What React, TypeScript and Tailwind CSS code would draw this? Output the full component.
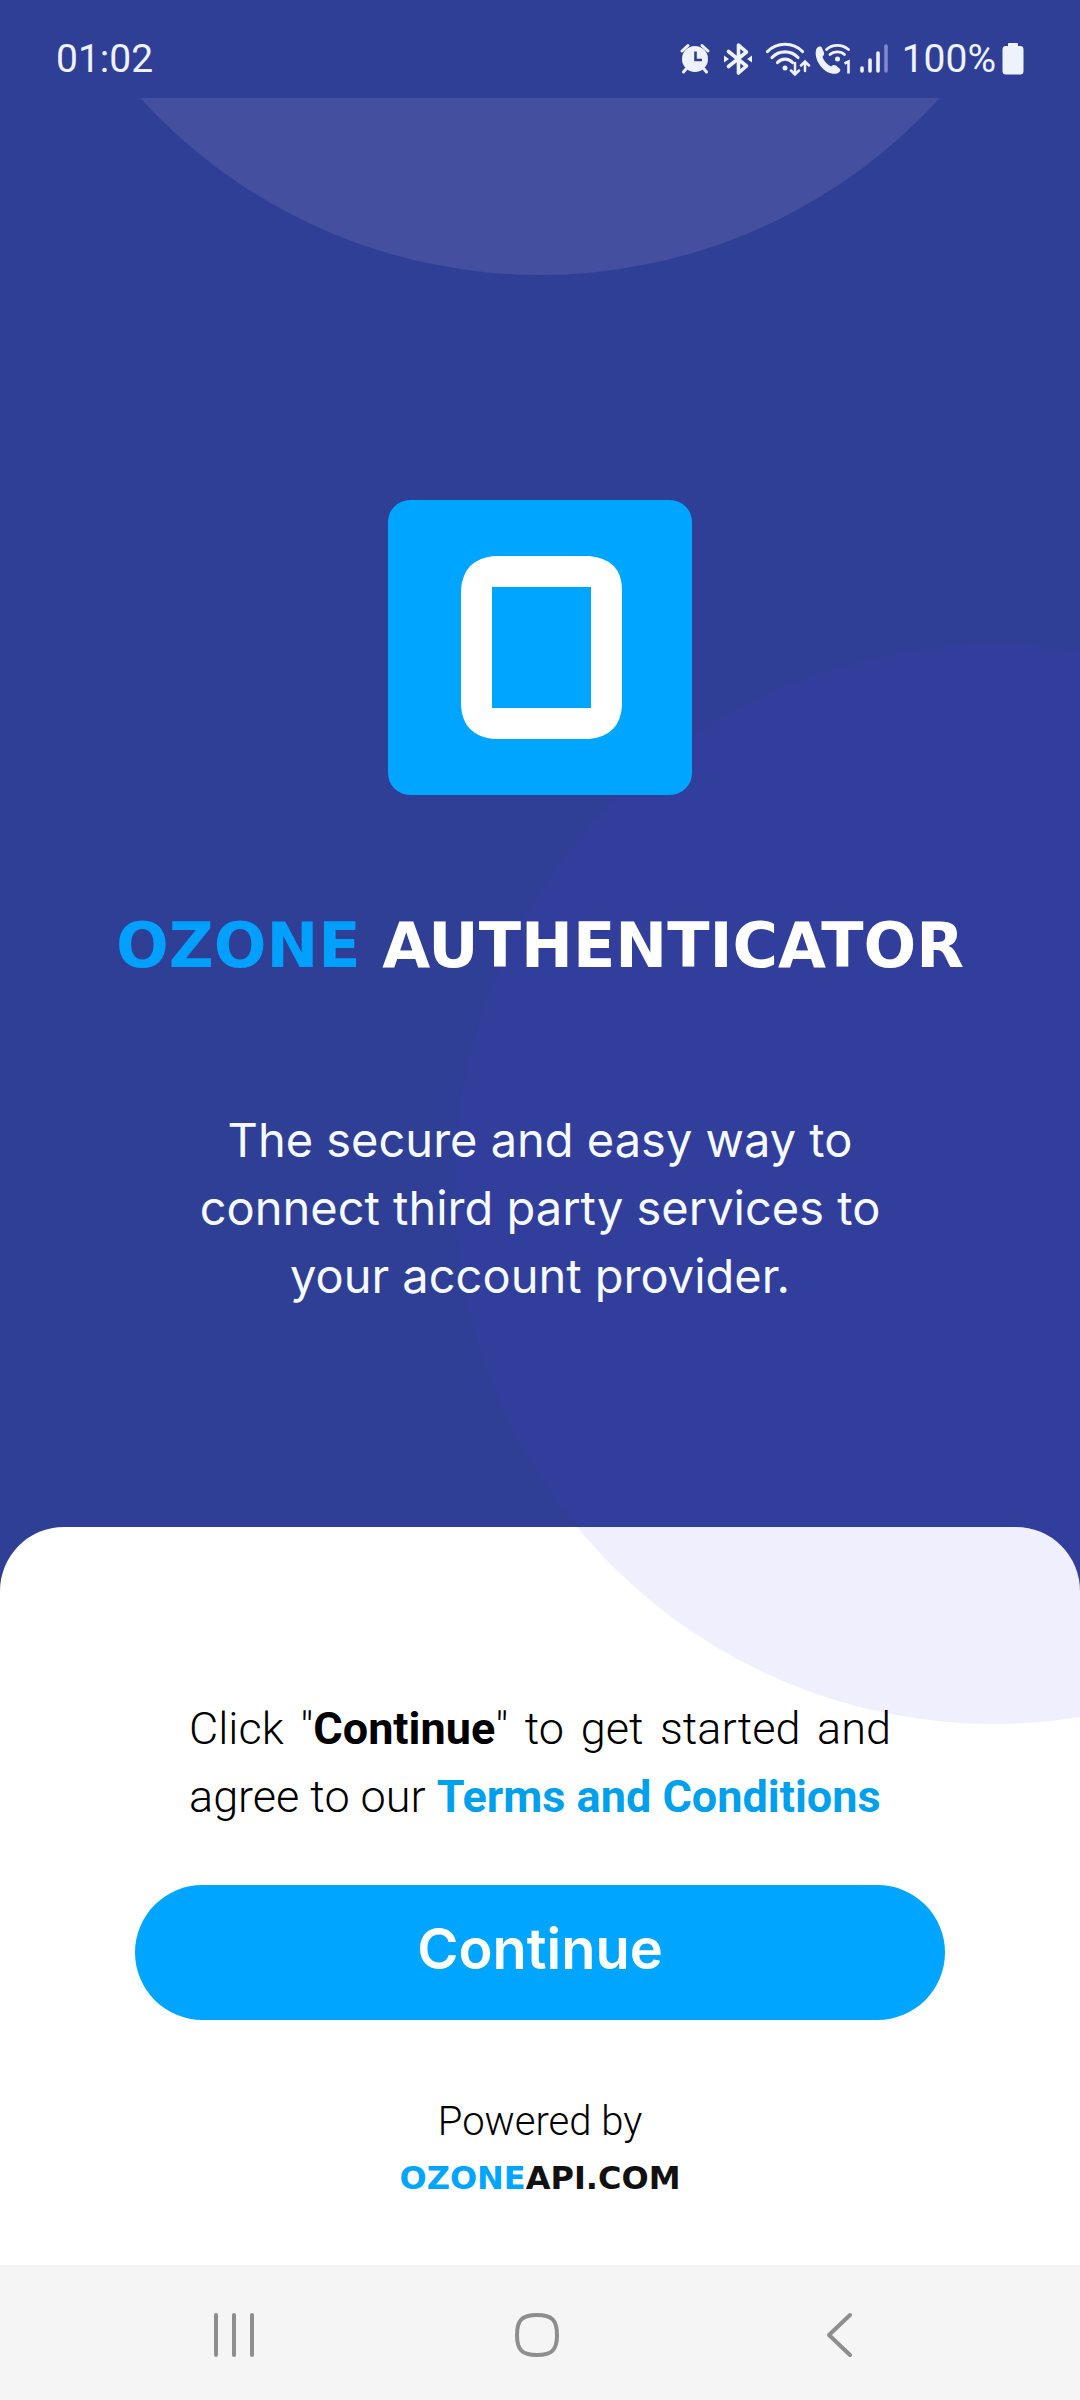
function AlarmIcon() {
  return (
    <svg className="h-[34px] w-[32px]" viewBox="0 0 32 34" fill="none" aria-hidden="true">
      <path d="M3 9 9 3.500M29 9 23 3.500" stroke="#eef2fc" strokeWidth="3" strokeLinecap="round" />
      <path d="M7 27 4.500 30M25 27 27.500 30" stroke="#eef2fc" strokeWidth="3" strokeLinecap="round" />
      <circle cx="16" cy="17" r="13" fill="#eef2fc" />
      <path d="M16.500 9.500V18H23" stroke="#303f96" strokeWidth="2.600" />
    </svg>
  );
}

function BluetoothIcon() {
  return (
    <svg className="h-[34px] w-[30px]" viewBox="0 0 30 34" fill="none" aria-hidden="true">
      <path d="M5.500 9.500 23.500 24 15.500 31V3L23.500 10 5.500 24.500" stroke="#eef2fc" strokeWidth="3.600" strokeLinejoin="round" strokeLinecap="round" />
      <path d="M1 13.500 6 17 1 20.500ZM29 13.500 24 17 29 20.500Z" fill="#eef2fc" />
    </svg>
  );
}

function WifiIcon() {
  return (
    <svg className="h-[34px] w-[46px]" viewBox="0 0 46 34" fill="none" stroke="#eef2fc" strokeLinecap="round" aria-hidden="true">
      <path d="M2.500 9.500C12-.2 28-.2 37.500 9.500M7 15.500C14 8 26 8 33 15.500M12.500 20.500C16.500 16 23.500 16 27.500 20.500" strokeWidth="3.200" />
      <circle cx="20" cy="26" r="2.500" fill="#eef2fc" stroke="none" />
      <path d="M30 21V32M26 28.500 30 32.500 34 28.500M40 29V19.500M36 23.500 40 19.500 44 23.500" strokeWidth="2.500" />
    </svg>
  );
}

function WifiCallIcon() {
  return (
    <svg className="h-[34px] w-[38px]" viewBox="0 0 38 34" fill="none" aria-hidden="true">
      <path d="M2.200 7.500C3.500 4.500 5.500 4 7.500 5L10 10.500C10.500 12.500 9.500 13.500 8.500 15 10 19 13 22.500 17 24.500 18.500 23 20 22.500 22 23.500L26 27C27 28.500 25.500 30.500 23 31.500 11 34-1 18 2.200 7.500Z" fill="#eef2fc" />
      <path d="M12.500 7.500C18.500 2 28 2 34.500 7.500M16 12.500C20 9 27 9 30.500 12.500" stroke="#eef2fc" strokeWidth="2.800" strokeLinecap="round" />
      <circle cx="23.500" cy="17" r="2.500" fill="#eef2fc" />
      <path d="M30.500 21.500 34.500 19.500V31.500" stroke="#eef2fc" strokeWidth="2.600" />
    </svg>
  );
}

function SignalIcon() {
  return (
    <svg className="h-[34px] w-[28px]" viewBox="0 0 28 34" fill="none" stroke="#eef2fc" strokeWidth="3.600" strokeLinecap="round" aria-hidden="true">
      <path d="M2 26V29M10 18V29M18 11V29" />
      <path d="M26 4V29" stroke="#7f88cc" />
    </svg>
  );
}

function BatteryIcon() {
  return (
    <svg className="h-[34px] w-[22px]" viewBox="0 0 22 34" fill="#eef2fc" aria-hidden="true">
      <path d="M7 1H15Q16 1 16 2V4H18.500Q21.500 4 21.500 7.500V29Q21.500 32.500 18 32.500H4Q.5 32.500 .5 29V7.500Q.5 4 3.500 4H6V2Q6 1 7 1Z" />
    </svg>
  );
}

function StatusBar() {
  return (
    <header className="relative z-10 flex h-[98px] items-center justify-between bg-[#303f96] px-14 pt-6 pb-1 text-[39px] leading-none text-[#eef2fc]">
      <time>01:02</time>
      <div className="flex items-center">
        <AlarmIcon />
        <span className="ml-3"><BluetoothIcon /></span>
        <span className="ml-3"><WifiIcon /></span>
        <span className="ml-[3px]"><WifiCallIcon /></span>
        <span className="ml-2"><SignalIcon /></span>
        <span className="ml-3.5">100%</span>
        <span className="ml-1.5"><BatteryIcon /></span>
      </div>
    </header>
  );
}

function Logo() {
  return (
    <svg className="relative z-20 h-[295px] w-[304px]" viewBox="0 0 304 295" role="img" aria-label="Ozone logo">
      <rect width="304" height="295" rx="22" fill="#00a5ff" />
      <path fillRule="evenodd" fill="#fff" d="M106 56H201Q234 59 234 90V150 206Q232 236 201 239H106Q75 236 73 206V90Q75 59 106 56ZM104 87V208H203V87Z" />
    </svg>
  );
}

function NavigationBar() {
  return (
    <nav className="relative z-10 grid h-[135px] grid-cols-3 bg-[#f5f5f5] pr-[88px] pl-[82px] pt-1" aria-label="System navigation">
      <button type="button" className="flex items-center justify-center" aria-label="Recent apps">
        <svg className="size-[48px]" viewBox="0 0 48 48" fill="none" stroke="#8e8e8e" strokeWidth="4" strokeLinecap="round">
          <path d="M6 4V44M24 4V44M42 4V44" />
        </svg>
      </button>
      <button type="button" className="flex items-center justify-center" aria-label="Home">
        <svg className="size-[48px]" viewBox="0 0 48 48" fill="none" stroke="#8e8e8e" strokeWidth="4">
          <path d="M24 4C39 4 44 9 44 24S39 44 24 44 4 39 4 24 9 4 24 4Z" />
        </svg>
      </button>
      <button type="button" className="flex items-center justify-center" aria-label="Back">
        <svg className="size-[48px]" viewBox="0 0 48 48" fill="none" stroke="#8e8e8e" strokeWidth="4" strokeLinecap="round" strokeLinejoin="round">
          <path d="M34 4 13 24 34 44" />
        </svg>
      </button>
    </nav>
  );
}

export default function App() {
  return (
    <div className="relative flex min-h-screen flex-col overflow-hidden bg-[#303f96] font-['Roboto',sans-serif]">
      <StatusBar />
      <div className="absolute -top-[805px] left-1/2 size-[1080px] -translate-x-1/2 rounded-full bg-[#444f9f]" />

      <main className="relative flex grow flex-col">
        <div className="pointer-events-none absolute top-[546px] -right-[454px] z-10 size-[1080px] rounded-full bg-[#3c2de6]/8" />

        <section className="flex grow flex-col items-center pt-[402px] pb-[200px] text-center text-white">
          <Logo />
          <h1 className="relative z-20 mt-[115px] font-['DejaVu_Sans',sans-serif] text-[62px] leading-[72px] font-bold whitespace-nowrap">
            <span className="text-[#00a0fc]">OZONE</span> AUTHENTICATOR
          </h1>
          <p className="relative z-20 mt-[124px] w-[720px] max-w-full font-['Inter',sans-serif] text-[47px] leading-[68px] text-[#f5faff]">
            The secure and easy way to connect third party services to your account provider.
          </p>
        </section>

        <section className="flex flex-col items-center rounded-t-[64px] bg-white pt-[168px] pb-[67px] text-black">
          <p className="relative z-20 w-[65%] text-justify text-[45px] leading-[68px] font-light">
            Click "<strong className="font-bold">Continue</strong>" to get started and agree to our{" "}
            <a href="#terms" className="font-bold text-[#00a0ec]">Terms and Conditions</a>
          </p>
          <button type="button" className="relative z-20 mt-[54px] h-[135px] w-3/4 rounded-full bg-[#00a5ff] pb-2 font-['Inter',sans-serif] text-[56px] font-semibold text-white">
            Continue
          </button>
          <p className="mt-[78px] text-[40px] leading-[48px] font-light">Powered by</p>
          <p className="mt-[12px] font-['DejaVu_Sans',sans-serif] text-[32px] leading-10 font-bold text-[#111]">
            <span className="text-[#00a5ff]">OZONE</span>API.COM
          </p>
        </section>
      </main>
      <NavigationBar />
    </div>
  );
}
